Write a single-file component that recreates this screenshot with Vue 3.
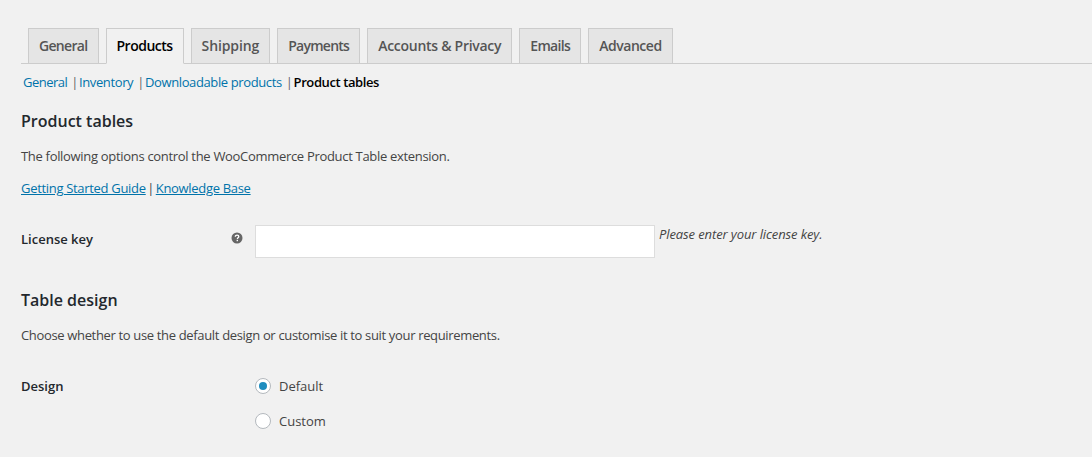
<script setup>
const tabs = [
  { name: 'General', ls: -0.68 },
  { name: 'Products', ls: -0.5 },
  { name: 'Shipping', ls: -0.12 },
  { name: 'Payments', ls: -0.73 },
  { name: 'Accounts & Privacy', ls: -0.28 },
  { name: 'Emails', ls: -0.65 },
  { name: 'Advanced', ls: -0.47 },
]
</script>

<template>
  <div class="wrap">
    <nav class="tabs">
      <a
        v-for="t in tabs"
        :key="t.name"
        class="tab"
        :class="{ active: t.name === 'Products' }"
        :style="{ letterSpacing: t.ls + 'px' }"
      >{{ t.name }}</a>
    </nav>
    <ul class="subs">
      <li><a class="link plain first">General</a><span class="sep">|</span></li>
      <li><a class="link plain">Inventory</a><span class="sep">|</span></li>
      <li><a class="link plain">Downloadable products</a><span class="sep">|</span></li>
      <li><strong class="current">Product tables</strong></li>
    </ul>
    <h2 class="h h1st">Product tables</h2>
    <p class="p p1">The following options control the WooCommerce Product Table extension.</p>
    <p class="p p2"><a class="link">Getting Started Guide</a> <span class="bar">|</span> <a class="link">Knowledge Base</a></p>
    <div class="row license">
      <label class="label">License key</label>
      <span class="tip">
        <svg width="12" height="12" viewBox="0 0 12 12">
          <circle cx="6" cy="6" r="5.5" fill="#666" />
          <path d="M4.3 4.7c0-1 .8-1.6 1.8-1.6s1.7.6 1.7 1.5c0 1.300-1.400 1.200-1.400 2.400" fill="none" stroke="#fff" stroke-width="1.300" />
          <rect x="5.600" y="7.800" width="1.400" height="1.400" fill="#fff" />
        </svg>
      </span>
      <input class="input" type="text" />
      <em class="desc">Please enter your license key.</em>
    </div>
    <h2 class="h h2nd">Table design</h2>
    <p class="p p3">Choose whether to use the default design or customise it to suit your requirements.</p>
    <div class="row design">
      <label class="label">Design</label>
      <div class="radios">
        <label class="radio"><span class="dot on"></span>Default</label>
        <label class="radio"><span class="dot"></span>Custom</label>
      </div>
    </div>
  </div>
</template>

<style>
html, body { margin: 0; background: #f1f1f1; }
</style>

<style scoped>
.wrap {
  height: 457px;
  overflow: hidden;
  box-sizing: border-box;
  padding: 28px 0 0 21px;
  background: #f1f1f1;
  font-family: "Open Sans", sans-serif;
  font-size: 13px;
  line-height: 18px;
  color: #444;
}
.tabs {
  display: flex;
  gap: 7px;
  height: 35px;
  padding-left: 7px;
  border-bottom: 1px solid #ccc;
}
.tab {
  box-sizing: border-box;
  height: 36px;
  padding: 5px 10px;
  border: 1px solid #ccc;
  background: #e5e5e5;
  font-size: 14px;
  font-weight: 600;
  line-height: 24px;
  color: #555;
}
.tab.active {
  background: #f1f1f1;
  border-bottom-color: #f1f1f1;
  color: #000;
}
.subs {
  display: flex;
  list-style: none;
  margin: 9px 0 0;
  padding: 0 0 0 2px;
  height: 18px;
  letter-spacing: -0.38px;
}
.sep { margin: 0 1px 0 4px; color: #666; }
.link { color: #0073aa; text-decoration: underline; }
.link.plain { text-decoration: none; }
.link.first { letter-spacing: -0.52px; }
.current { font-weight: 600; color: #000; letter-spacing: -0.4px; }
.h {
  margin: 0;
  font-size: 16px;
  font-weight: 600;
  line-height: 21px;
  color: #23282d;
}
.h1st { margin-top: 20px; }
.p { margin: 0; letter-spacing: -0.31px; }
.p1 { margin-top: 15px; }
.p2 { margin-top: 14px; }
.bar { margin: 0 -1.5px; }
.row { display: flex; }
.label { font-weight: 600; color: #23282d; }
.license { margin-top: 28px; height: 33px; align-items: flex-start; }
.license .label { width: 210px; margin-top: 5px; }
.tip { width: 24px; height: 12px; margin-top: 7px; display: block; }
.tip svg { display: block; }
.input {
  box-sizing: border-box;
  width: 400px;
  height: 33px;
  margin: 0;
  border: 1px solid #ddd;
  background: #fff;
  padding: 0;
  outline: none;
}
.desc { margin: 0 0 0 4px; line-height: 18px; letter-spacing: -0.1px; }
.h2nd { margin-top: 32px; }
.p3 { margin-top: 15px; letter-spacing: -0.34px; }
.design { margin-top: 33px; }
.design .label { width: 234px; }
.radios { display: flex; flex-direction: column; gap: 17px; }
.radio { display: flex; align-items: center; gap: 8px; height: 18px; }
.dot {
  box-sizing: border-box;
  width: 16px;
  height: 16px;
  border-radius: 50%;
  border: 1px solid #b4b9be;
  background: #fff;
  display: flex;
  align-items: center;
  justify-content: center;
}
.dot.on::before {
  content: "";
  width: 8px;
  height: 8px;
  border-radius: 50%;
  background: #1e8cbe;
}
</style>
